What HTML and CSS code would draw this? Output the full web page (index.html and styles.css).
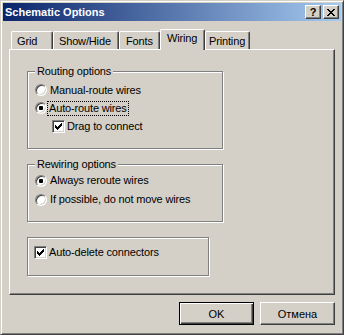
FILE: index.html
```html
<!DOCTYPE html>
<html lang="en">
<head>
    <meta charset="UTF-8">
    <title>Schematic Options</title>
    <link rel="stylesheet" href="styles.css">
</head>
<body>
  <div class="window">
    <div class="titlebar">
      <span class="title">Schematic Options</span>
      <div class="caption-buttons">
        <span class="cap-btn help">?</span>
        <span class="cap-btn close">
          <svg width="8" height="7" viewBox="0 0 8 7" shape-rendering="crispEdges">
            <path d="M0 0h2v1h-2z M6 0h2v1h-2z M1 1h2v1h-2z M5 1h2v1h-2z M2 2h4v1h-4z M3 3h2v1h-2z M2 4h4v1h-4z M1 5h2v1h-2z M5 5h2v1h-2z M0 6h2v1h-2z M6 6h2v1h-2z" fill="#000"/>
          </svg>
        </span>
      </div>
    </div>

    <div class="tabs">
      <div class="tab tab-grid">Grid</div>
      <div class="tab tab-show">Show/Hide</div>
      <div class="tab tab-fonts">Fonts</div>
      <div class="tab tab-wiring selected">Wiring</div>
      <div class="tab tab-printing">Printing</div>
    </div>

    <div class="panel">
      <div class="group group-routing">
        <span class="legend">Routing options</span>
        <div class="rows">
          <div class="row">
            <span class="radio"></span>
            <span class="label">Manual-route wires</span>
          </div>
          <div class="row">
            <span class="radio on"></span>
            <span class="label focus">Auto-route wires</span>
          </div>
          <div class="row indent">
            <span class="check"><svg width="7" height="7" viewBox="0 0 7 7" shape-rendering="crispEdges"><path d="M6 0h1v1h-1z M5 1h2v1h-2z M0 2h1v1h-1z M4 2h3v1h-3z M0 3h2v1h-2z M3 3h3v1h-3z M0 4h5v1h-5z M1 5h3v1h-3z M2 6h1v1h-1z" fill="#000"/></svg></span>
            <span class="label">Drag to connect</span>
          </div>
        </div>
      </div>

      <div class="group group-rewiring">
        <span class="legend">Rewiring options</span>
        <div class="rows">
          <div class="row">
            <span class="radio on"></span>
            <span class="label">Always reroute wires</span>
          </div>
          <div class="row">
            <span class="radio"></span>
            <span class="label">If possible, do not move wires</span>
          </div>
        </div>
      </div>

      <div class="group group-delete">
        <div class="rows">
          <div class="row">
            <span class="check"><svg width="7" height="7" viewBox="0 0 7 7" shape-rendering="crispEdges"><path d="M6 0h1v1h-1z M5 1h2v1h-2z M0 2h1v1h-1z M4 2h3v1h-3z M0 3h2v1h-2z M3 3h3v1h-3z M0 4h5v1h-5z M1 5h3v1h-3z M2 6h1v1h-1z" fill="#000"/></svg></span>
            <span class="label">Auto-delete connectors</span>
          </div>
        </div>
      </div>
    </div>

    <div class="buttons">
      <span class="btn default">OK</span>
      <span class="btn">Отмена</span>
    </div>
  </div>
</body>
</html>
```

FILE: styles.css
```css
body {
  margin: 0;
  font-family: "Liberation Sans", Arial, sans-serif;
  font-size: 11px;
  color: #000;
}

.window {
  width: 344px;
  height: 335px;
  box-sizing: border-box;
  background: #d4d0c8;
  border: 1px solid;
  border-color: #d4d0c8 #404040 #404040 #d4d0c8;
  box-shadow: inset 1px 1px #fff, inset -1px -1px #808080;
  padding: 2px;
}

/* title bar */
.titlebar {
  height: 18px;
  display: flex;
  align-items: center;
  padding-left: 2px;
  background: linear-gradient(to right, #0a246a, #a6caf0);
}
.title {
  color: #fff;
  font-weight: bold;
  font-size: 11px;
}
.caption-buttons {
  margin-left: auto;
  margin-right: 2px;
  display: flex;
  gap: 2px;
}
.cap-btn {
  width: 16px;
  height: 14px;
  box-sizing: border-box;
  display: flex;
  align-items: center;
  justify-content: center;
  background: #d4d0c8;
  border: 1px solid;
  border-color: #fff #404040 #404040 #fff;
  box-shadow: inset -1px -1px #808080;
}
.cap-btn.help {
  font-weight: bold;
  font-size: 11px;
  line-height: 12px;
}

/* tabs */
.tabs {
  height: 28px;
  display: flex;
  align-items: flex-end;
  padding-left: 8px;
}
.tab {
  height: 18px;
  box-sizing: border-box;
  padding-top: 3px;
  line-height: 13px;
  letter-spacing: -0.15px;
  white-space: nowrap;
  background: #d4d0c8;
  border-top: 1px solid #fff;
  border-left: 1px solid #fff;
  border-right: 1px solid #404040;
  border-radius: 2px 2px 0 0;
  box-shadow: inset -1px 0 #808080;
}
.tab.selected {
  height: 21px;
  margin-bottom: -1px;
  padding-top: 2px;
  position: relative;
  z-index: 1;
}
.tab-grid { width: 42px; padding-left: 5px; }
.tab-show { width: 66px; padding-left: 5px; }
.tab-fonts { width: 41px; padding-left: 6px; }
.tab-wiring { width: 45px; padding-left: 6px; }
.tab-printing { width: 45px; padding-left: 3px; }

/* tab page */
.panel {
  margin: 0 6px;
  height: 246px;
  box-sizing: border-box;
  border: 1px solid;
  border-color: #fff #404040 #404040 #fff;
  box-shadow: inset -1px -1px #808080;
  padding: 21px 0 0 17px;
}

.group {
  box-sizing: border-box;
  border: 1px solid #808080;
  box-shadow: inset 1px 1px #fff, 1px 1px #fff;
  margin-bottom: 15px;
}
.group-routing { width: 196px; height: 78px; }
.group-rewiring { width: 196px; height: 58px; }
.group-delete { width: 182px; height: 39px; }

.legend {
  display: block;
  width: fit-content;
  margin: -7px 0 0 7px;
  padding: 0 2px;
  line-height: 13px;
  letter-spacing: -0.15px;
  background: #d4d0c8;
}

.rows {
  padding-left: 6px;
}
.group-routing .rows { padding-top: 3px; }
.group-delete .rows { padding-top: 5px; }

.row {
  height: 18px;
  display: flex;
  align-items: center;
}
.group-rewiring .row { height: 19px; }
.row.indent { padding-left: 18px; }

.label {
  line-height: 13px;
  letter-spacing: -0.15px;
  white-space: nowrap;
}
.label.focus {
  outline: 1px dotted #000;
  padding: 0 1px;
  margin-left: -2px;
}

.radio {
  width: 12px;
  height: 12px;
  box-sizing: border-box;
  margin: 0 3px 0 1px;
  border-radius: 50%;
  border: 1px solid;
  border-color: #808080 #fff #fff #808080;
  box-shadow: inset 1px 1px #404040, inset -1px -1px #d4d0c8;
  background: #fff;
}
.radio.on {
  background: radial-gradient(circle at 50% 50%, #000 0 2px, #fff 2.5px);
}

.check {
  width: 13px;
  height: 13px;
  box-sizing: border-box;
  margin-right: 2px;
  display: flex;
  align-items: center;
  justify-content: center;
  border: 1px solid;
  border-color: #808080 #fff #fff #808080;
  box-shadow: inset 1px 1px #404040, inset -1px -1px #d4d0c8;
  background: #fff;
}

/* dialog buttons */
.buttons {
  display: flex;
  justify-content: flex-end;
  gap: 6px;
  margin: 7px 6px 0 0;
}
.btn {
  width: 75px;
  height: 23px;
  box-sizing: border-box;
  display: flex;
  align-items: center;
  justify-content: center;
  border: 1px solid;
  border-color: #fff #404040 #404040 #fff;
  box-shadow: inset -1px -1px #808080;
}
.btn.default {
  border-color: #000;
  box-shadow: inset 1px 1px #fff, inset -1px -1px #404040, inset -2px -2px #808080;
}
```
